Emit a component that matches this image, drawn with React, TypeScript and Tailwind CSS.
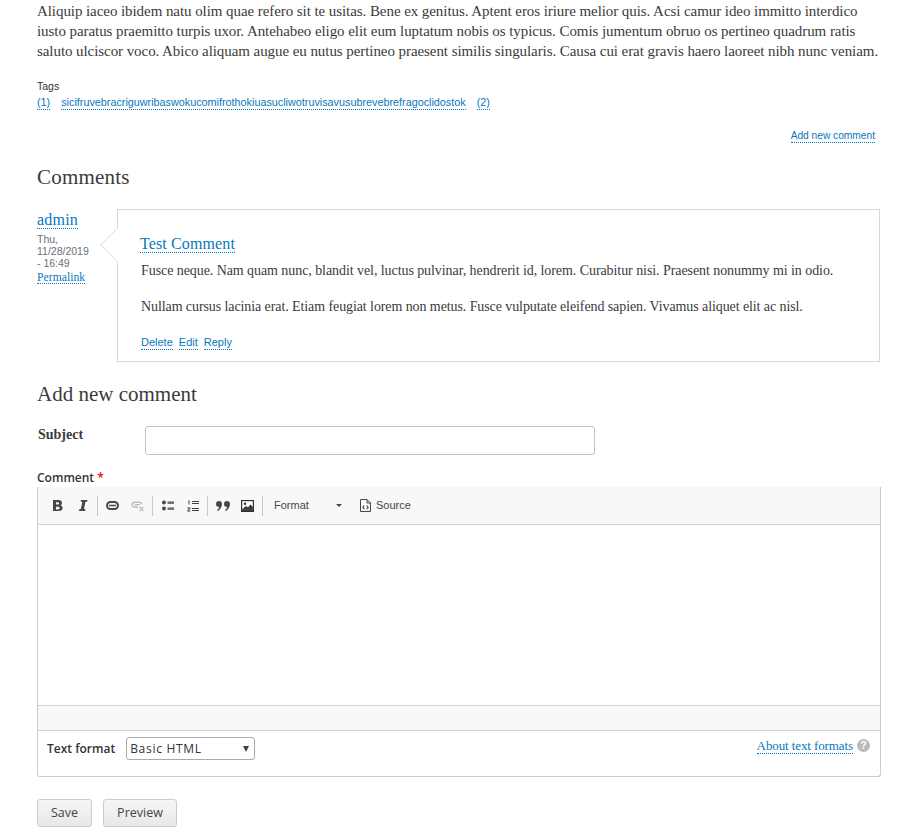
import React from "react";

const serif = "[font-family:'Liberation_Serif',serif]";

function A({ children, className = "" }: { children: React.ReactNode; className?: string }) {
  return <a className={"text-[#0678be] border-b border-dotted border-[#0678be] " + className}>{children}</a>;
}

function Sep() {
  return <span className="w-px h-[20px] bg-[#c8c8c8] mx-[2px]" />;
}

function Tb({ children }: { children: React.ReactNode }) {
  return <span className="w-[25px] h-[24px] flex items-center justify-center">{children}</span>;
}

export default function App() {
  return (
    <div className="w-[918px] h-[835px] overflow-hidden bg-white text-[#333] pl-[37px] [font-family:'Liberation_Sans',sans-serif]">
      <div className="w-[843px]">
        <p className="[font-family:'Liberation_Serif',serif] text-[15px] leading-[20px] whitespace-nowrap tracking-[-0.07px] text-[#3b3b3b] pt-[1px]">
          Aliquip iaceo ibidem natu olim quae refero sit te usitas. Bene ex genitus. Aptent eros iriure melior quis. Acsi camur ideo immitto interdico<br />
          iusto paratus praemitto turpis uxor. Antehabeo eligo elit eum luptatum nobis os typicus. Comis jumentum obruo os pertineo quadrum ratis<br />
          saluto ulciscor voco. Abico aliquam augue eu nutus pertineo praesent similis singularis. Causa cui erat gravis haero laoreet nibh nunc veniam.
        </p>

        <div className="mt-[19px] text-[10.5px] leading-[12px] text-[#333]">Tags</div>
        <div className="mt-[4px] flex gap-[11px] text-[10.8px] leading-[13px]">
          <A>(1)</A>
          <A>sicifruvebracriguwribaswokucomifrothokiuasucliwotruvisavusubrevebrefragoclidostok</A>
          <A>(2)</A>
        </div>

        <div className="mt-[20px] flex justify-end pr-[5px] text-[10.2px] leading-[12px]">
          <A>Add new comment</A>
        </div>

        <h2 className={serif + " mt-[22px] text-[21px] leading-[24px] font-normal tracking-[0.2px] text-[#3b3b3b]"}>Comments</h2>

        <div className="mt-[20px] flex">
          <div className="w-[80px] shrink-0">
            <div className={serif + " text-[16px] leading-[18px] mt-[2px] tracking-[0.2px]"}><A>admin</A></div>
            <div className="mt-[4px] text-[10.5px] leading-[12px] text-[#68717a]">Thu,<br />11/28/2019<br />- 16:49</div>
            <div className={serif + " text-[11.5px] leading-[13px] mt-[2px] tracking-[0.1px]"}><A>Permalink</A></div>
          </div>
          <div className="relative flex-1 h-[153px] border border-[#d8d8d8] pl-[22px] pt-[24px]">
            <span className="absolute left-[-13px] top-[23px] w-[24px] h-[24px] rotate-45 bg-white border-l border-b border-[#e4e4e4]" />
            <div className="relative">
              <div className={serif + " text-[16px] leading-[19px] tracking-[0.12px]"}><A>Test Comment</A></div>
              <div className="pl-[1px]">
                <p className={serif + " mt-[8px] text-[14px] leading-[20px] tracking-[-0.07px] text-[#3b3b3b] whitespace-nowrap"}>Fusce neque. Nam quam nunc, blandit vel, luctus pulvinar, hendrerit id, lorem. Curabitur nisi. Praesent nonummy mi in odio.</p>
                <p className={serif + " mt-[16px] text-[14px] leading-[20px] tracking-[-0.09px] text-[#3b3b3b] whitespace-nowrap"}>Nullam cursus lacinia erat. Etiam feugiat lorem non metus. Fusce vulputate eleifend sapien. Vivamus aliquet elit ac nisl.</p>
                <div className="mt-[19px] flex gap-[6px] text-[11px] leading-[13px]">
                  <A>Delete</A><A>Edit</A><A>Reply</A>
                </div>
              </div>
            </div>
          </div>
        </div>

        <h2 className={serif + " mt-[20px] text-[21px] leading-[24px] font-normal tracking-[0px] text-[#3b3b3b]"}>Add new comment</h2>

        <div className="mt-[20px] flex items-start">
          <label className={serif + " w-[108px] pl-[1px] font-bold text-[14px] leading-[17px] text-[#3b3b3b]"}>Subject</label>
          <div className="w-[450px] h-[29px] border border-[#c4c4c4] rounded-[3px] bg-white" />
        </div>

        <div className="mt-[15px] text-[12px] leading-[16px] [font-family:'Open_Sans',sans-serif] font-semibold text-[#333]">Comment <span className="text-[#e00]">*</span></div>

        <div className="mt-[1px] w-[844px] h-[290px] border-x border-b border-[#ccc] rounded-b-[3px] flex flex-col">
          <div className="h-[38px] bg-[#f8f8f8] border-b border-[#d1d1d1] flex items-center pl-[7px] text-[#474747]">
            <Tb><svg width="12" height="13" viewBox="0 0 12 13" fill="#474747"><path fillRule="evenodd" d="M1 1h5.400c2.300 0 3.600 1.100 3.600 2.900 0 1.200-.7 2-1.700 2.400 1.400.3 2.300 1.300 2.300 2.800 0 2-1.500 3-3.900 3H1V1zm3 2.200v2.400h1.800c.9 0 1.300-.5 1.300-1.200S6.700 3.200 5.800 3.200H4zm0 4.500v2.700h2.100c1 0 1.500-.5 1.500-1.400 0-.8-.6-1.300-1.500-1.300H4z" /></svg></Tb>
            <Tb><svg width="10" height="13" viewBox="0 0 10 13" fill="#474747"><path d="M3 1h6.500l-.3 1.500-1.800.4L6 10.100l1.500.4-.3 1.500H.8l.3-1.500 1.800-.4 1.400-7.200-1.600-.4z" /></svg></Tb>
            <Sep />
            <Tb><svg width="13" height="9" viewBox="0 0 13 9" fill="none" stroke="#474747"><rect x="1" y="1" width="11" height="7" rx="3.500" strokeWidth="2" /><path d="M3 4.500h7" strokeWidth="1.500" /></svg></Tb>
            <Tb><svg width="14" height="12" viewBox="0 0 14 12" fill="none" stroke="#bdbdbd"><path d="M7 7H3.500a2.400 2.400 0 0 1 0-4.800h5a2.400 2.400 0 0 1 2.400 2M3.500 4.600H9" strokeWidth="1.400" /><path d="M8.500 7l3.800 4m0-4-3.800 4" strokeWidth="1.400" /></svg></Tb>
            <Sep />
            <Tb><svg width="12" height="11" viewBox="0 0 12 11" fill="#474747"><circle cx="2" cy="2.500" r="2" /><circle cx="2" cy="8.500" r="2" /><path d="M5.500 1.500H12v1.300H5.500zM5.500 3.300H12v.8H5.500zM5.500 7.500H12v1.300H5.500zM5.500 9.300H12v.8H5.500z" /></svg></Tb>
            <Tb><svg width="12" height="12" viewBox="0 0 12 12" fill="#474747"><path d="M5 1h7v1H5zM5 3h7v1H5zM5 8h7v1H5zM5 10h7v1H5z" /><path d="M1.300.5h1.200v4H1.500V1.500h-.4zM.3 7.500h3.200v.9L1.500 10.500h2v1H.3v-.9l2-2.100h-2z" /></svg></Tb>
            <Sep />
            <Tb><svg width="14" height="10" viewBox="0 0 14 10" fill="#474747"><path d="M3 0a3 3 0 0 1 3 3c0 3-2 6-4.500 7L1 9c1.200-.8 1.800-1.700 2-3a3 3 0 0 1 0-6zM11 0a3 3 0 0 1 3 3c0 3-2 6-4.500 7L9 9c1.200-.8 1.800-1.700 2-3a3 3 0 0 1 0-6z" /></svg></Tb>
            <Tb><svg width="13" height="12" viewBox="0 0 13 12"><rect width="13" height="12" fill="#333" /><rect x="1.200" y="1.200" width="10.600" height="8" fill="#fff" /><circle cx="4" cy="3.800" r="1.300" fill="#333" /><path d="M1.200 9.200 5 6l2 1.600L9.500 4.500l2.300 2.500v2.200z" fill="#333" /></svg></Tb>
            <Sep />
            <span className="ml-[9px] w-[62px] text-[11px] text-[#474747]">Format</span>
            <span className="w-0 h-0 border-x-[3px] border-x-transparent border-t-[3px] border-t-[#474747]" />
            <span className="ml-[18px] flex"><svg width="11" height="13" viewBox="0 0 11 13" fill="none" stroke="#474747"><path d="M.5.500h6.500l3.500 3.500v8.500H.5z" /><path d="M7 .500V4h3.500" /><path d="M4.300 6.500 2.800 8.300l1.500 1.800M6.700 6.500l1.500 1.800-1.500 1.800" strokeWidth="1.100" /></svg></span>
            <span className="ml-[5px] text-[11px] text-[#474747]">Source</span>
          </div>
          <div className="h-[180px] bg-white" />
          <div className="h-[26px] bg-[#f8f8f8] border-y border-[#d1d1d1]" />
          <div className="flex-1 flex items-start justify-between pt-[6px] pl-[9px] pr-[10px]">
            <div className="flex items-center">
              <span className="text-[12px] leading-[23px] [font-family:'Open_Sans',sans-serif] font-semibold text-[#333]">Text format</span>
              <div className="ml-[11px] w-[129px] h-[23px] border border-[#aaa] rounded-[3px] flex items-center justify-between pl-[3px] pr-[5px] text-[12px] tracking-[0.7px] [font-family:'Open_Sans',sans-serif] text-[#333]">
                <span>Basic HTML</span>
                <span className="w-0 h-0 border-x-[3.5px] border-x-transparent border-t-[6px] border-t-[#444]" />
              </div>
            </div>
            <div className="flex items-center">
              <span className={serif + " text-[13px] leading-[17px] tracking-[-0.1px]"}><A>About text formats</A></span>
              <span className="ml-[4px] w-[13px] h-[13px] rounded-full bg-[#bbb] text-white text-[10px] font-bold flex items-center justify-center">?</span>
            </div>
          </div>
        </div>

        <div className="mt-[22px] flex gap-[11px] text-[12.5px] [font-family:'Open_Sans',sans-serif] text-[#444]">
          <div className="w-[55px] h-[28px] rounded-[3px] border border-[#ccc] bg-gradient-to-b from-[#f6f6f6] to-[#e8e8e8] flex items-center justify-center">Save</div>
          <div className="w-[74px] h-[28px] rounded-[3px] border border-[#ccc] bg-gradient-to-b from-[#f6f6f6] to-[#e8e8e8] flex items-center justify-center">Preview</div>
        </div>
      </div>
    </div>
  );
}
